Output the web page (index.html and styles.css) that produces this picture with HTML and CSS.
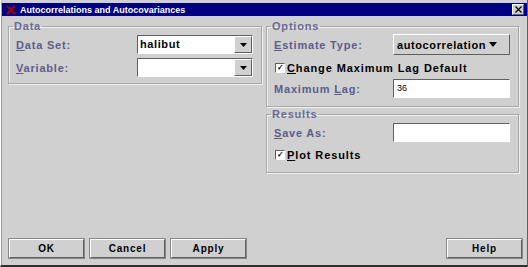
FILE: index.html
```html
<!DOCTYPE html>
<html lang="en">
<head>
  <meta charset="UTF-8" />
  <title>Autocorrelations and Autocovariances</title>
  <link rel="stylesheet" href="styles.css">
</head>
<body>
  <div class="window">
    <div class="titlebar">
      <svg class="app-icon" width="10" height="10" viewBox="0 0 10 10">
        <path d="M1 1 L9 9 M9 1 L1 9" stroke="#c00000" stroke-width="2.2" />
        <path d="M1 1 L9 9 M9 1 L1 9" stroke="#600000" stroke-width="0.6" />
      </svg>
      <span class="title">Autocorrelations and Autocovariances</span>
      <span class="close-btn">
        <svg width="7" height="7" viewBox="0 0 7 7"><path d="M0.5 0.5 L6.5 6.5 M6.5 0.5 L0.5 6.5" stroke="#000" stroke-width="1.3" /></svg>
      </span>
    </div>

    <div class="content">
      <div class="col left">
        <fieldset class="group group-data">
          <legend>Data</legend>
          <div class="row">
            <label><u>D</u>ata Set:</label>
            <div class="combo">
              <span class="combo-text">halibut</span>
              <span class="combo-arrow"><svg width="7" height="4" viewBox="0 0 7 4"><path d="M0 0 H7 L3.5 4 Z" fill="#000" /></svg></span>
            </div>
          </div>
          <div class="row">
            <label><u>V</u>ariable:</label>
            <div class="combo">
              <span class="combo-text"></span>
              <span class="combo-arrow"><svg width="7" height="4" viewBox="0 0 7 4"><path d="M0 0 H7 L3.5 4 Z" fill="#000" /></svg></span>
            </div>
          </div>
        </fieldset>
      </div>

      <div class="col right">
        <fieldset class="group group-options">
          <legend>Options</legend>
          <div class="row">
            <label><u>E</u>stimate Type:</label>
            <div class="menu-btn">autocorrelation<svg class="menu-arrow" width="8" height="5" viewBox="0 0 8 5"><path d="M0 0 H8 L4 5 Z" fill="#000" /></svg></div>
          </div>
          <div class="check-row lag-check">
            <span class="check">&#10003;</span>
            <span class="check-label"><u>C</u>hange Maximum Lag Default</span>
          </div>
          <div class="row">
            <label>Maximum <u>L</u>ag:</label>
            <div class="field small">36</div>
          </div>
        </fieldset>

        <fieldset class="group group-results">
          <legend>Results</legend>
          <div class="row">
            <label><u>S</u>ave As:</label>
            <div class="field"></div>
          </div>
          <div class="check-row">
            <span class="check">&#10003;</span>
            <span class="check-label"><u>P</u>lot Results</span>
          </div>
        </fieldset>
      </div>
    </div>

    <div class="buttons">
      <button class="btn">OK</button>
      <button class="btn">Cancel</button>
      <button class="btn">Apply</button>
      <span class="spacer"></span>
      <button class="btn">Help</button>
    </div>
  </div>
</body>
</html>
```

FILE: styles.css
```css
*, *::before, *::after {
  box-sizing: border-box;
}
body {
  margin: 0;
  background: #d0d0d0;
  font-family: 'Liberation Sans', Arial, sans-serif;
  font-size: 10px;
  font-weight: bold;
}
.window {
  width: 528px;
  height: 267px;
  display: flex;
  flex-direction: column;
  background: #d0d0d0;
  border-left: 1px solid #ffffff;
  border-bottom: 2px solid #303030;
  border-right: 1px solid #606060;
}

/* title bar */
.titlebar {
  height: 16px;
  background: #000080;
  display: flex;
  align-items: center;
  padding: 0 3px 0 4px;
  border-top: 3px solid #d0d0d0;
  border-left: 1px solid #a0a0a0;
}
.app-icon {
  margin-right: 4px;
}
.title {
  color: #ffffff;
  font-size: 9px;
  flex: 1;
}
.close-btn {
  width: 12px;
  height: 11px;
  background: #d0d0d0;
  border: 1px solid;
  border-color: #ffffff #606060 #606060 #ffffff;
  display: flex;
  align-items: center;
  justify-content: center;
}

/* panels */
.content {
  display: flex;
  padding: 5px 8px 0 6px;
  gap: 4px;
  flex: 1;
  border-left: 1px solid #a0a0a0;
}
.col {
  display: flex;
  flex-direction: column;
}
.left {
  width: 254px;
}
.right {
  flex: 1;
  gap: 2px;
}
.group {
  margin: 0;
  padding: 2px 8px 4px 7px;
  border: 1px solid #a8a8a8;
  box-shadow: 1px 1px 0 #f0f0f0, inset 1px 1px 0 #f0f0f0;
}
.group-options {
  padding-bottom: 6px;
}
.group-results {
  padding-bottom: 7px;
}
.group legend {
  color: #6a6a98;
  padding: 0 1px;
  margin-left: -3px;
  font-size: 11px;
  letter-spacing: 0.8px;
  line-height: 10px;
}
.row {
  display: flex;
  align-items: center;
  justify-content: space-between;
  height: 23px;
}
label {
  color: #5c5c8c;
  font-size: 11px;
  letter-spacing: 0.8px;
}

.combo {
  width: 116px;
  height: 19px;
  display: flex;
  border: 1px solid;
  border-color: #606060 #ffffff #ffffff #606060;
}
.combo-text {
  flex: 1;
  background: #ffffff;
  color: #000000;
  font-size: 11px;
  padding: 2px 2px;
  letter-spacing: 0.6px;
}
.combo-arrow {
  width: 18px;
  background: #d0d0d0;
  border: 1px solid;
  border-color: #ffffff #606060 #606060 #ffffff;
  display: flex;
  align-items: center;
  justify-content: center;
}

.menu-btn {
  width: 117px;
  height: 21px;
  border: 1px solid;
  border-color: #ffffff #606060 #606060 #ffffff;
  font-size: 11px;
  letter-spacing: 0.6px;
  color: #000;
  display: flex;
  align-items: center;
  padding-left: 3px;
}
.menu-arrow {
  margin-left: 3px;
}

.field {
  width: 117px;
  height: 19px;
  background: #ffffff;
  border: 1px solid;
  border-color: #606060 #ffffff #ffffff #606060;
  font-weight: normal;
  color: #000;
  padding: 3px 3px;
}
.field.small {
  font-size: 9px;
}

.check-row {
  display: flex;
  align-items: center;
  height: 21px;
  padding-left: 1px;
}
.lag-check {
  padding-top: 2px;
}
.check {
  width: 10px;
  height: 10px;
  background: #ffffff;
  border: 1px solid;
  border-color: #606060 #ffffff #ffffff #606060;
  font-size: 8px;
  line-height: 8px;
  text-align: center;
  margin-right: 2px;
}
.check-label {
  color: #000;
  font-size: 11px;
  letter-spacing: 0.9px;
}

/* bottom buttons */
.buttons {
  display: flex;
  gap: 6px;
  padding: 0 5px 7px 7px;
  border-left: 1px solid #a0a0a0;
}
.spacer {
  flex: 1;
}
.btn {
  width: 75px;
  height: 19px;
  background: #d0d0d0;
  border: 1px solid;
  border-color: #ffffff #606060 #606060 #ffffff;
  box-shadow: 0 0 0 1px #888888;
  font-family: 'Liberation Sans', Arial, sans-serif;
  font-size: 10px;
  font-weight: bold;
  letter-spacing: 0.8px;
  color: #000;
  padding: 0;
}
```
